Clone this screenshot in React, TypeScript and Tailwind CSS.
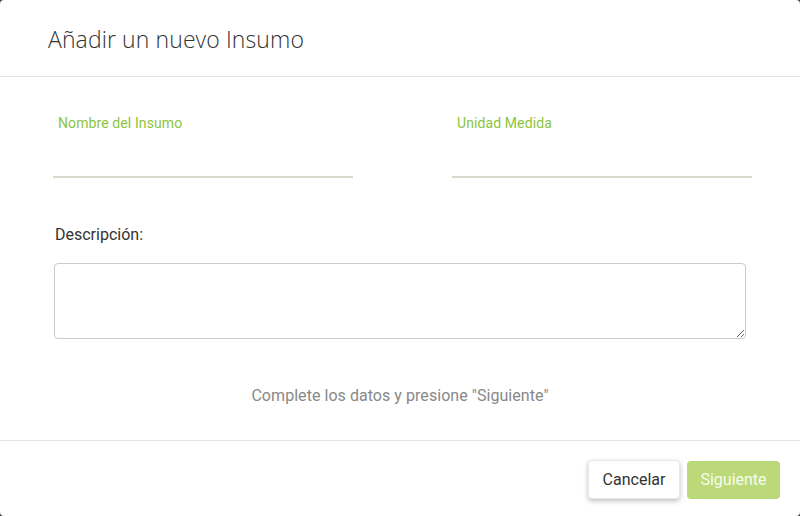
import React from "react";

export default function App() {
  return (
    <div className="w-[800px] h-[516px] bg-[#3a3a3a] overflow-hidden" style={{ fontFamily: "Roboto, 'Liberation Sans', sans-serif" }}>
      <div className="w-[800px] h-[516px] bg-white rounded-[4px] flex flex-col">
        <div className="h-[77px] border-b border-[#e5e5e5] flex items-center pl-12 shrink-0">
          <h1 className="text-[23px] text-[#333] font-light tracking-[0.1px] mt-[2px]" style={{ fontFamily: "'Open Sans', sans-serif" }}>
            Añadir un nuevo Insumo
          </h1>
        </div>
        <div className="flex-1 flex flex-col">
          <div className="flex pl-[53px] pt-[36px]">
            <div className="w-[300px]">
              <div className="text-[14px] leading-[20px] text-[#8cc43c] pl-[5px] tracking-[0.1px]">Nombre del Insumo</div>
              <div className="h-[45px] border-b-2 border-[#d6dccd]" />
            </div>
            <div className="w-[300px] ml-[99px]">
              <div className="text-[14px] leading-[20px] text-[#8cc43c] pl-[5px] tracking-[0.1px]">Unidad Medida</div>
              <div className="h-[45px] border-b-2 border-[#d6dccd]" />
            </div>
          </div>
          <div className="pl-[55px] pt-[45px] text-[16px] leading-[24px] text-[#333]">Descripción:</div>
          <div className="pl-[54px] pr-[54px] pt-[16px]">
            <textarea className="block w-[692px] h-[76px] border border-[#cccccc] rounded-[4px] resize-y outline-none" />
          </div>
          <div className="text-center text-[16px] leading-[24px] text-[#888] pt-[45px] tracking-[0.05px]">
            Complete los datos y presione "Siguiente"
          </div>
        </div>
        <div className="h-[76px] border-t border-[#e5e5e5] flex items-start justify-end pr-5 pt-[19px] gap-[7px] shrink-0">
          <button className="h-[39px] w-[92px] bg-white rounded-[4px] text-[16px] text-[#333] shadow-[0_2px_5px_rgba(0,0,0,0.25)] border border-[#e8e8e8]">
            Cancelar
          </button>
          <button className="h-[38px] w-[93px] bg-[#bcd97a] rounded-[4px] text-[16px] text-[#f7fbee] mt-[1px]">
            Siguiente
          </button>
        </div>
      </div>
    </div>
  );
}
